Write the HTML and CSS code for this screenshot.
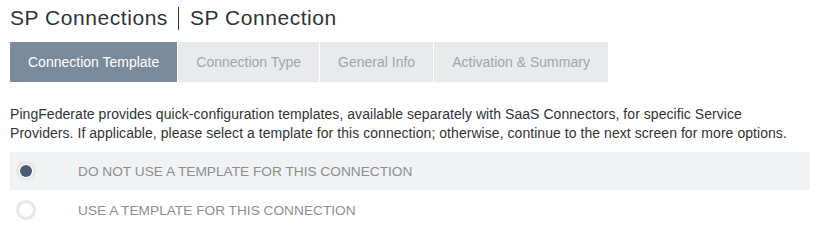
FILE: index.html
```html
<!DOCTYPE html>
<html>
<head>
<meta charset="utf-8">
<link rel="stylesheet" href="styles.css">
</head>
<body>
<div class="page">
  <h1 class="title"><span class="crumb">SP Connections</span><span class="sep"></span><span class="crumb">SP Connection</span></h1>
  <div class="tabs">
    <div class="tab active">Connection Template</div>
    <div class="tab">Connection Type</div>
    <div class="tab">General Info</div>
    <div class="tab">Activation &amp; Summary</div>
  </div>
  <p class="desc">PingFederate provides quick-configuration templates, available separately with SaaS Connectors, for specific Service Providers. If applicable, please select a template for this connection; otherwise, continue to the next screen for more options.</p>
  <div class="options">
    <label class="option selected"><span class="radio checked"></span><span class="label">DO NOT USE A TEMPLATE FOR THIS CONNECTION</span></label>
    <label class="option"><span class="radio"></span><span class="label">USE A TEMPLATE FOR THIS CONNECTION</span></label>
  </div>
</div>
</body>
</html>
```
FILE: styles.css
```css
html, body {
  margin: 0;
  padding: 0;
  background: #fff;
}
body {
  font-family: "Liberation Sans", Arial, sans-serif;
  color: #333;
}
.page {
  padding: 6px 6px 0 10px;
  width: 800px;
}
.title {
  margin: 0;
  font-size: 21px;
  font-weight: normal;
  color: #2e3338;
  display: flex;
  align-items: center;
  height: 24px;
  letter-spacing: 0.55px;
}
.sep {
  display: inline-block;
  width: 1px;
  height: 23px;
  background: #333;
  margin: 0 11px 0 10px;
}
.tabs {
  display: flex;
  gap: 1px;
  margin-top: 12px;
}
.tab {
  height: 40px;
  line-height: 40px;
  padding: 0 18px;
  background: #e9eaeb;
  color: #a3a6a9;
  font-size: 14px;
}
.tab.active {
  background: #7b8a9b;
  color: #fff;
}
.desc {
  margin: 23px 0 0 0;
  max-width: 785px;
  font-size: 14px;
  line-height: 19px;
  letter-spacing: 0.05px;
  color: #333;
}
.options {
  margin-top: 9px;
  display: flex;
  flex-direction: column;
}
.option {
  display: flex;
  align-items: center;
  height: 38px;
  padding-left: 6px;
}
.option.selected {
  background: #f1f2f3;
  margin-bottom: 1px;
}
.radio {
  box-sizing: border-box;
  width: 20px;
  height: 20px;
  border-radius: 50%;
  border: 3px solid #e6e7e8;
  background: #fff;
  display: flex;
  align-items: center;
  justify-content: center;
}
.radio.checked::after {
  content: "";
  width: 12px;
  height: 12px;
  border-radius: 50%;
  background: #4a5b74;
}
.label {
  margin-left: 42px;
  font-size: 13.7px;
  color: #8c8e90;
}
```
